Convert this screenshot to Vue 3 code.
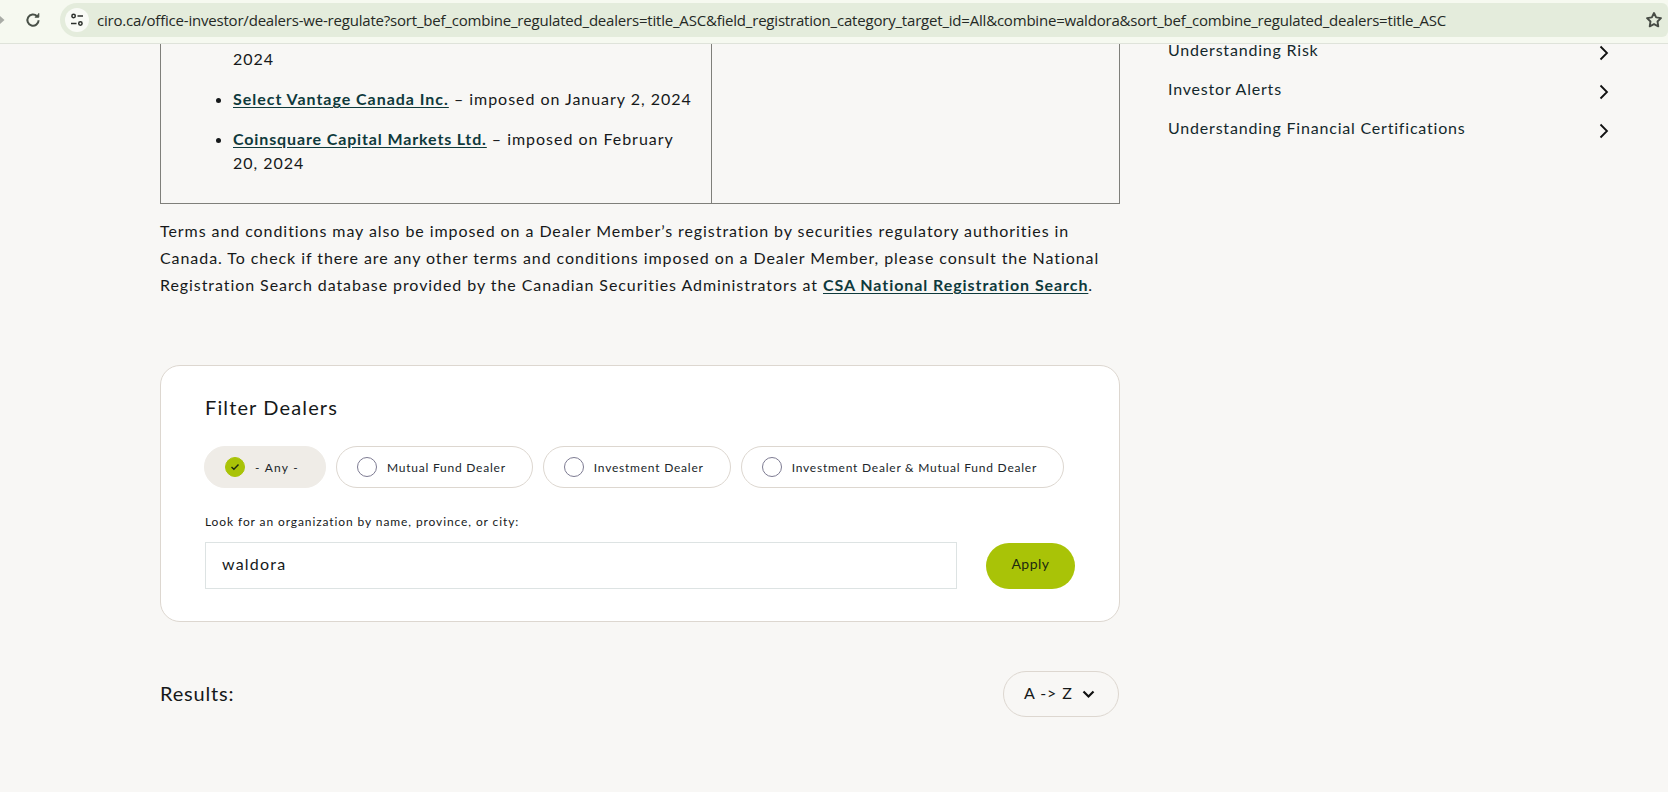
<script setup>
const sideLinks = ['Understanding Risk', 'Investor Alerts', 'Understanding Financial Certifications']
const filters = [
  { label: '- Any -', on: true },
  { label: 'Mutual Fund Dealer', on: false },
  { label: 'Investment Dealer', on: false },
  { label: 'Investment Dealer & Mutual Fund Dealer', on: false },
]
const url = 'ciro.ca/office-investor/dealers-we-regulate?sort_bef_combine_regulated_dealers=title_ASC&field_registration_category_target_id=All&combine=waldora&sort_bef_combine_regulated_dealers=title_ASC'
</script>

<template>
  <div class="window">
    <header class="chrome">
      <svg class="back" width="6" height="12" viewBox="0 0 6 12"><path d="M0 2 L4.5 6 L0 10 Z" fill="#a9aca6" /></svg>
      <svg class="reload" width="16" height="16" viewBox="0 0 16 16" fill="none" stroke="#495148" stroke-width="2">
        <path d="M13.6 8.2a5.6 5.6 0 1 1-1.6-4" />
        <path d="M13.8 1.2v4H9.8" fill="#495148" stroke-width="1" />
      </svg>
      <div class="omnibox">
        <span class="tune">
          <svg width="14" height="14" viewBox="0 0 14 14" fill="none" stroke="#2c302c" stroke-width="1.5">
            <circle cx="3.6" cy="3" r="1.7" /><path d="M7.5 3h5.5M1 10.5h5.5" /><circle cx="10.4" cy="10.5" r="1.7" />
          </svg>
        </span>
        <span class="url">{{ url }}</span>
        <svg class="star" width="18" height="18" viewBox="0 0 16 16" fill="none" stroke="#474c45" stroke-width="1.7" stroke-linejoin="round">
          <path d="M8 1.8l1.9 3.9 4.3.6-3.1 3 .7 4.3L8 11.6l-3.8 2 .7-4.3-3.1-3 4.3-.6z" />
        </svg>
      </div>
    </header>

    <div class="viewport">
      <div class="page">
        <main class="main">
          <table class="terms">
            <tbody>
              <tr>
                <td class="cell-list">
                  <ul>
                    <li class="first">2024</li>
                    <li><a>Select Vantage Canada Inc.</a> – imposed on January 2, 2024</li>
                    <li><a class="tight">Coinsquare Capital Markets Ltd.</a> – imposed on February<br />20, 2024</li>
                  </ul>
                </td>
                <td></td>
              </tr>
            </tbody>
          </table>

          <p class="note">
            Terms and conditions may also be imposed on a Dealer Member’s registration by securities regulatory authorities in<br />
            Canada. To check if there are any other terms and conditions imposed on a Dealer Member, please consult the National<br />
            Registration Search database provided by the Canadian Securities Administrators at <a>CSA National Registration Search</a>.
          </p>

          <section class="card">
            <h2>Filter Dealers</h2>
            <div class="pills">
              <div v-for="f in filters" :key="f.label" class="pill" :class="{ on: f.on }">
                <span class="radio">
                  <svg v-if="f.on" width="10" height="8" viewBox="0 0 10 8" fill="none" stroke="#1c2a10" stroke-width="1.4"><path d="M1.5 4l2.4 2.3L8.5 1.5" /></svg>
                </span>
                <span>{{ f.label }}</span>
              </div>
            </div>
            <label class="search-label">Look for an organization by name, province, or city:</label>
            <div class="search-row">
              <div class="input">waldora</div>
              <button class="apply">Apply</button>
            </div>
          </section>

          <div class="results">
            <span class="results-title">Results:</span>
            <div class="sort">
              <span>A -&gt; Z</span>
              <svg width="13" height="9" viewBox="0 0 13 9" fill="none" stroke="#111" stroke-width="2.2"><path d="M1.5 1.5l5 5 5-5" /></svg>
            </div>
          </div>
        </main>

        <aside class="side">
          <div v-for="s in sideLinks" :key="s" class="side-link">
            <span>{{ s }}</span>
            <svg width="10" height="16" viewBox="0 0 10 16" fill="none" stroke="#111" stroke-width="1.8"><path d="M1.5 1.5l6.5 6.5-6.5 6.5" /></svg>
          </div>
        </aside>
      </div>
    </div>
  </div>
</template>

<style>
html, body { margin: 0; padding: 0; background: #f8f7f5; }
</style>

<style scoped>
.window {
  width: 1668px;
  height: 792px;
  overflow: hidden;
  display: flex;
  flex-direction: column;
  background: #f8f7f5;
  font-family: Lato, "Noto Sans", sans-serif;
  color: #16191a;
}
.chrome {
  height: 44px;
  flex: none;
  box-sizing: border-box;
  display: flex;
  align-items: flex-start;
  background: #f6f9f0;
  border-bottom: 1px solid #dfe3da;
  position: relative;
  padding-top: 3px;
}
.back { position: absolute; left: 0; top: 14px; }
.reload { position: absolute; left: 25px; top: 12px; }
.omnibox {
  margin-left: 60px;
  width: 1608px;
  height: 34px;
  border-radius: 17px 6px 6px 17px;
  background: #e4ecdc;
  display: flex;
  align-items: center;
  padding-left: 5px;
  box-sizing: border-box;
}
.tune {
  width: 24px;
  height: 24px;
  border-radius: 50%;
  background: #f9fbf6;
  display: flex;
  align-items: center;
  justify-content: center;
  flex: none;
}
.url {
  margin-left: 8px;
  font-family: "Open Sans", sans-serif;
  font-size: 15px;
  letter-spacing: -0.2px;
  color: #252925;
  white-space: nowrap;
  flex: 1;
  overflow: hidden;
}
.star { flex: none; margin-right: 5px; }

.viewport { flex: 1; overflow: hidden; }
.page {
  display: grid;
  grid-template-columns: 960px 1fr;
  column-gap: 48px;
  padding-left: 160px;
  margin-top: -21px;
}
.terms {
  width: 960px;
  border-collapse: collapse;
  table-layout: fixed;
}
.terms td {
  border: 1px solid #7f7f7a;
  border-top: 0;
  padding: 0;
  height: 180px;
}
.cell-list { width: 550px; vertical-align: top; }
.terms ul {
  margin: 0;
  padding: 24px 20px 28px 72px;
  list-style: disc;
}
.terms li {
  font-size: 16px;
  line-height: 24px;
  letter-spacing: 0.97px;
  margin-top: 16px;
  white-space: nowrap;
}
.terms li.first { margin-top: 0; list-style: none; }
a {
  color: #0f3a3c;
  font-weight: 700;
  text-decoration: underline;
  text-underline-offset: 2px;
}
a.tight { letter-spacing: 0.87px; }
.note {
  margin: 13px 0 0;
  font-size: 16px;
  line-height: 27px;
  letter-spacing: 0.93px;
  white-space: nowrap;
}
.card {
  width: 960px;
  height: 257px;
  box-sizing: border-box;
  margin-top: 67px;
  padding: 28px 44px 0;
  background: #fff;
  border: 1px solid #ddd7d0;
  border-radius: 20px;
}
h2 {
  margin: 0;
  font-size: 20px;
  line-height: 26px;
  font-weight: 400;
  letter-spacing: 1.13px;
}
.pills {
  display: flex;
  gap: 10px;
  margin-top: 26px;
  margin-left: -1px;
}
.pill {
  height: 42px;
  box-sizing: border-box;
  display: flex;
  align-items: center;
  gap: 10px;
  padding: 0 26px 0 20px;
  border: 1px solid #ddd7d0;
  border-radius: 21px;
  font-size: 12px;
  letter-spacing: 0.77px;
  color: #20262a;
  white-space: nowrap;
}
.pill.on { background: #efece7; border-color: #efece7; letter-spacing: 1.25px; }
.radio {
  width: 20px;
  height: 20px;
  box-sizing: border-box;
  border-radius: 50%;
  border: 1px solid #7d7b92;
  display: flex;
  align-items: center;
  justify-content: center;
  flex: none;
}
.pill.on .radio { background: #a9c307; border-color: #a9c307; }
.search-label {
  display: block;
  margin-top: 26px;
  font-size: 12px;
  line-height: 16px;
  letter-spacing: 0.9px;
}
.search-row {
  display: flex;
  align-items: center;
  gap: 29px;
  margin-top: 12px;
}
.input {
  width: 752px;
  height: 47px;
  box-sizing: border-box;
  border: 1px solid #dde3e3;
  padding: 0 0 4px 16px;
  display: flex;
  align-items: center;
  font-size: 16px;
  letter-spacing: 1.2px;
}
.apply {
  width: 89px;
  height: 46px;
  border: 0;
  border-radius: 23px;
  padding: 0 0 4px;
  background: #a9c307;
  font-family: inherit;
  font-size: 14px;
  letter-spacing: 0.5px;
  color: #1c2a10;
}
.results {
  display: flex;
  align-items: center;
  justify-content: space-between;
  margin-top: 49px;
  width: 959px;
}
.results-title { font-size: 20px; letter-spacing: 0.8px; padding-bottom: 3px; }
.sort {
  width: 116px;
  height: 46px;
  box-sizing: border-box;
  border: 1px solid #ddd7d0;
  border-radius: 23px;
  display: flex;
  align-items: center;
  gap: 9px;
  padding: 0 0 3px 20px;
  font-size: 16px;
  letter-spacing: 0.9px;
}
.sort svg { margin-top: 3px; }
.side { padding-top: 7px; }
.side-link {
  height: 39px;
  width: 446px;
  display: flex;
  align-items: center;
  justify-content: space-between;
  font-size: 16px;
  letter-spacing: 0.8px;
  color: #14282c;
}
.side-link svg { margin-top: 7px; margin-right: 5px; }
</style>
